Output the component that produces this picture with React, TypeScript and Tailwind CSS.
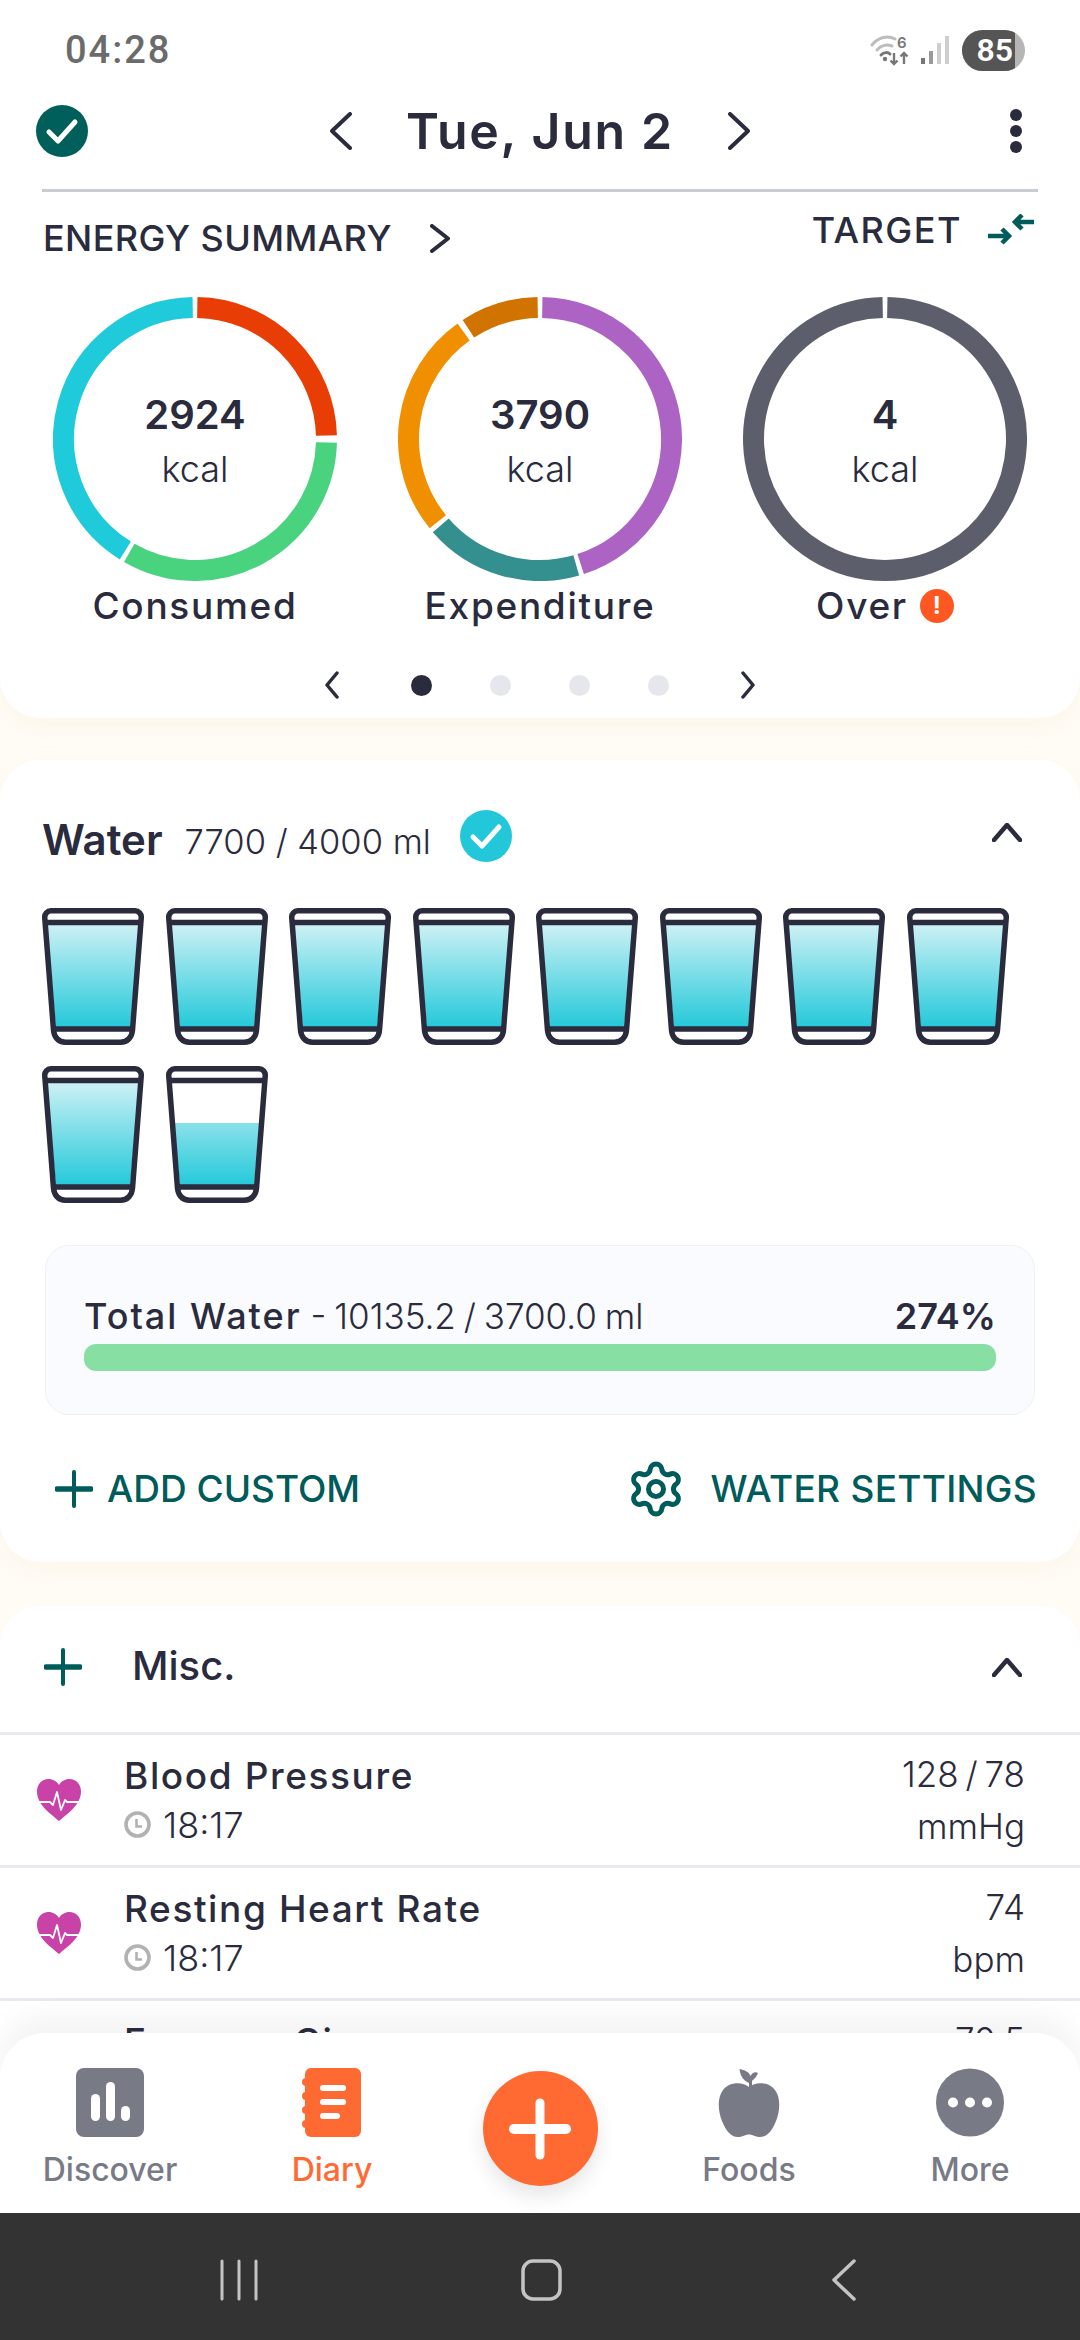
import { Settings } from "lucide-react";

const INK = "#2a2b3d";

function arc(r: number, a0: number, a1: number) {
  const p = (a: number) => {
    const t = ((a - 90) * Math.PI) / 180;
    return `${(142 + r * Math.cos(t)).toFixed(2)} ${(142 + r * Math.sin(t)).toFixed(2)}`;
  };
  return `M${p(a0)} A${r} ${r} 0 ${a1 - a0 > 180 ? 1 : 0} 1 ${p(a1)}`;
}

type Seg = [number, number, string];

function Ring({ segs, value }: { segs: Seg[]; value: string }) {
  return (
    <div className="relative w-[284px] h-[284px]">
      <svg width="284" height="284" viewBox="0 0 284 284">
        {segs.map(([a, b, c], i) => (
          <path key={i} d={arc(131.5, a, b)} fill="none" stroke={c} strokeWidth="21" />
        ))}
      </svg>
      <div className="absolute inset-0 flex flex-col items-center pt-[94px]">
        <div className="text-[40px] leading-[48px] font-semibold text-[#2a2b3d]">{value}</div>
        <div className="text-[36px] leading-[44px] mt-[8px] font-light text-[#2a2b3d]">kcal</div>
      </div>
    </div>
  );
}

function Chevron({ dir, w, h, sw = 4, color = INK }: { dir: "l" | "r" | "u"; w: number; h: number; sw?: number; color?: string }) {
  const d =
    dir === "l"
      ? `M${w - 2} 2 L2 ${h / 2} L${w - 2} ${h - 2}`
      : dir === "r"
        ? `M2 2 L${w - 2} ${h / 2} L2 ${h - 2}`
        : `M2 ${h - 2} L${w / 2} 2 L${w - 2} ${h - 2}`;
  return (
    <svg width={w} height={h} viewBox={`0 0 ${w} ${h}`} className="shrink-0">
      <path d={d} fill="none" stroke={color} strokeWidth={sw} strokeLinecap="round" strokeLinejoin="round" />
    </svg>
  );
}

function Check({ fill, size = 52 }: { fill: string; size?: number }) {
  return (
    <svg width={size} height={size} viewBox="0 0 52 52" className="shrink-0">
      <circle cx="26" cy="26" r="26" fill={fill} />
      <path d="M13 27 L22 36 L39 17" fill="none" stroke="#fff" strokeWidth="5" strokeLinecap="round" strokeLinejoin="round" />
    </svg>
  );
}

function Plus() {
  return (
    <svg width="38" height="38" viewBox="0 0 38 38" className="shrink-0">
      <path d="M2 19 H36" stroke="#005b5b" strokeWidth="5.5" strokeLinecap="round" />
      <path d="M19 2 V36" stroke="#005b5b" strokeWidth="4" strokeLinecap="round" />
    </svg>
  );
}

function Cup({ id, level = 16 }: { id: string; level?: number }) {
  return (
    <svg width="102" height="137" viewBox="0 0 102 137">
      <defs>
        <linearGradient id={id} gradientUnits="userSpaceOnUse" x1="0" y1="16" x2="0" y2="119">
          <stop offset="0" stopColor="#cdf1f5" />
          <stop offset="1" stopColor="#25c9da" />
        </linearGradient>
      </defs>
      <path
        d={`M${5 + ((level - 14) / 107) * 9} ${level} H${97 - ((level - 14) / 107) * 9} L88 121 H14 Z`}
        fill={`url(#${id})`}
      />
      <path
        d="M9 2.75H93a6.5 6.5 0 0 1 6.25 7L90.5 122c-.5 7-5 12.25-12 12.25H23.5c-7 0-11.5-5.25-12-12.25L2.75 9.75a6.5 6.5 0 0 1 6.25-7Z"
        fill="none"
        stroke={INK}
        strokeWidth="5.5"
      />
      <path d="M3 14.5H99M11 121H91" stroke={INK} strokeWidth="5.5" />
    </svg>
  );
}

function Heart() {
  return (
    <svg width="44" height="42" viewBox="0 0 44 42" className="shrink-0">
      <path
        d="M22 42 C14 35 0 26 0 12.5 C0 5 5 0 11.5 0 C16 0 20 2.5 22 6 C24 2.5 28 0 32.5 0 C39 0 44 5 44 12.5 C44 26 30 35 22 42Z"
        fill="#c942a8"
      />
      <path d="M2 23 H13 L16 26 L20 13 L24 31 L28 21 L30 23 H42" fill="none" stroke="#fff" strokeWidth="1.8" strokeLinejoin="round" />
    </svg>
  );
}

function Clock() {
  return (
    <svg width="27" height="27" viewBox="0 0 27 27" className="shrink-0">
      <circle cx="13.5" cy="13.5" r="11.5" fill="none" stroke="#b2b2b2" strokeWidth="3.6" />
      <path d="M12.5 8 V15.5 H18" fill="none" stroke="#b2b2b2" strokeWidth="2.6" />
    </svg>
  );
}

function Row({ name, value, unit, time = "18:17" }: { name: string; value: string; unit: string; time?: string }) {
  return (
    <div className="flex items-center h-[130px] pl-[37px] pr-[55px] text-[#2a2b3d]">
      <Heart />
      <div className="ml-[43px] flex-1">
        <div className="text-[37px] leading-[44px] font-medium tracking-[1.6px]">{name}</div>
        <div className="flex items-center mt-[5px] text-[36px] leading-[44px] font-light">
          <Clock />
          <span className="ml-[12px]">{time}</span>
        </div>
      </div>
      <div className="text-right text-[35px] leading-[44px] font-light [word-spacing:-3px]">
        <div>{value}</div>
        <div className="mt-[8px]">{unit}</div>
      </div>
    </div>
  );
}

function NavItem({ w, label, color, children }: { w: string; label: string; color: string; children: React.ReactNode }) {
  return (
    <div className={`${w} flex flex-col items-center pt-[35px]`}>
      <div className="h-[69px] flex items-center">{children}</div>
      <div className={`mt-[13px] text-[32px] leading-[40px] font-medium ${color}`}>{label}</div>
    </div>
  );
}

const RINGS: { segs: Seg[]; value: string }[] = [
  {
    value: "2924",
    segs: [
      [1, 88.5, "#e83e05"],
      [91.5, 210, "#49d37f"],
      [212, 359, "#1fcadb"],
    ],
  },
  {
    value: "3790",
    segs: [
      [1, 162, "#ac63c3"],
      [164, 229, "#34908f"],
      [231, 324.5, "#f09000"],
      [327, 359, "#d17300"],
    ],
  },
  { value: "4", segs: [[1, 359, "#5c5f6b"]] },
];

export default function App() {
  return (
    <div className="relative w-[1080px] h-[2340px] flex flex-col overflow-hidden bg-[#fffcf6] font-[Inter,sans-serif] text-[#2a2b3d]">
      <div className="relative flex-1 overflow-hidden">
        {/* Energy card */}
        <div className="bg-white rounded-b-[40px] shadow-[0_8px_24px_rgba(240,200,140,0.10)] pb-[18px]">
          <div className="h-[100px] flex items-center justify-between pl-[65px] pr-[55px]">
            <div className="font-[Roboto,sans-serif] font-medium text-[38px] text-[#6b6b6b] tracking-[2px]">04:28</div>
            <div className="flex items-center">
              <svg width="42" height="32" viewBox="0 0 42 32" className="shrink-0">
                <g fill="none" stroke="#bdbdbd" strokeWidth="3" strokeLinecap="round">
                  <path d="M2 11 C8 3 18 1 25 5" />
                  <path d="M7 16 C11 11 17 10 22 12" />
                </g>
                <path d="M11 21 C14 18 18 18 20 20" fill="none" stroke="#777" strokeWidth="3" strokeLinecap="round" />
                <circle cx="15" cy="25" r="2.2" fill="#777" />
                <path d="M24 19 V30 M20.5 26.5 L24 30 L27.5 26.5 M34 30 V19 M30.5 22.5 L34 19 L37.5 22.5" fill="none" stroke="#777" strokeWidth="2.4" />
                <text x="27" y="14" fontSize="15" fontWeight="600" fill="#777">6</text>
              </svg>
              <svg width="30" height="30" viewBox="0 0 30 30" className="ml-[8px] shrink-0">
                <rect x="1" y="23" width="4" height="6" fill="#777" />
                <rect x="9" y="16" width="4" height="13" fill="#9a9a9a" />
                <rect x="17" y="8" width="4" height="21" fill="#cfcfcf" />
                <rect x="25" y="1" width="4" height="28" fill="#cfcfcf" />
              </svg>
              <div className="ml-[12px] w-[63px] h-[41px] rounded-full overflow-hidden bg-[#b6b6b6] flex">
                <div className="w-[53px] h-full bg-[#555555] flex items-center justify-end">
                  <span className="text-white text-[32px] leading-none font-semibold font-[Roboto,sans-serif] mr-[2px]">85</span>
                </div>
              </div>
            </div>
          </div>
          <div className="h-[62px] flex items-center pl-[36px] pr-[58px]">
            <Check fill="#005f5b" />
            <div className="flex-1 flex items-center justify-center pr-[18px]">
              <Chevron dir="l" w={22} h={38} />
              <div className="w-[376px] text-center text-[50px] leading-[56px] font-semibold tracking-[1.7px]">Tue, Jun 2</div>
              <Chevron dir="r" w={22} h={38} />
            </div>
            <div className="w-[12px] flex flex-col gap-[4px]">
              <div className="w-[12px] h-[12px] rounded-full bg-[#2a2b3d]" />
              <div className="w-[12px] h-[12px] rounded-full bg-[#2a2b3d]" />
              <div className="w-[12px] h-[12px] rounded-full bg-[#2a2b3d]" />
            </div>
          </div>
          <div className="mt-[27px] mx-[42px] h-[3px] bg-[#c9ccd3]" />
          <div className="h-[105px] pt-[16px] pl-[43px] pr-[46px] flex justify-between items-start">
            <div className="mt-[8px] flex items-center">
              <div className="text-[36px] leading-[44px] font-medium tracking-[0.4px]">ENERGY SUMMARY</div>
              <div className="ml-[38px]">
                <Chevron dir="r" w={20} h={29} sw={4} />
              </div>
            </div>
            <div className="flex items-center">
              <div className="text-[36px] leading-[44px] font-medium tracking-[1.5px]">TARGET</div>
              <svg width="46" height="32" viewBox="0 0 46 32" className="ml-[26px] shrink-0">
                <path d="M46 8 H28 M34 1 L27 8 L34 15" fill="none" stroke="#005b5b" strokeWidth="4.5" />
                <path d="M0 22 H18 M14 15 L21 22 L14 29" fill="none" stroke="#005b5b" strokeWidth="4.5" />
              </svg>
            </div>
          </div>
          <div className="flex justify-center">
            {RINGS.map((r, i) => (
              <div key={i} className="w-[345px] flex flex-col items-center">
                <Ring segs={r.segs} value={r.value} />
              </div>
            ))}
          </div>
          <div className="flex justify-center mt-[3px] text-[37px] leading-[44px] font-medium tracking-[1.7px]">
            <div className="w-[345px] text-center">Consumed</div>
            <div className="w-[345px] text-center">Expenditure</div>
            <div className="w-[345px] flex justify-center items-center gap-[12px]">
              <span>Over</span>
              <span className="w-[34px] h-[34px] rounded-full bg-[#ff5722] text-white flex items-center justify-center text-[24px] leading-none font-bold tracking-normal">!</span>
            </div>
          </div>
          <div className="mt-[42px] h-[30px] flex items-center justify-center">
            <Chevron dir="l" w={14} h={28} sw={3.5} />
            <div className="mx-[72px] flex items-center gap-[57.7px]">
              <div className="w-[21px] h-[21px] rounded-full bg-[#2a2b3d]" />
              <div className="w-[21px] h-[21px] rounded-full bg-[#e5e7ed]" />
              <div className="w-[21px] h-[21px] rounded-full bg-[#e5e7ed]" />
              <div className="w-[21px] h-[21px] rounded-full bg-[#e5e7ed]" />
            </div>
            <Chevron dir="r" w={14} h={28} sw={3.5} />
          </div>
        </div>

        {/* Water card */}
        <div className="mt-[42px] bg-white rounded-[40px] shadow-[0_8px_24px_rgba(240,200,140,0.10)] pt-[56px] pb-[49px]">
          <div className="h-[48px] pl-[42px] pr-[58px] flex items-center">
            <div className="text-[42px] leading-[48px] font-semibold">Water</div>
            <div className="ml-[22px] text-[34.5px] leading-[48px] font-light mt-[4px]">7700 / 4000 ml</div>
            <div className="ml-[29px] -mt-[8px]">
              <Check fill="#22c8da" />
            </div>
            <div className="ml-auto -mt-[16px]">
              <Chevron dir="u" w={30} h={19} sw={4.5} />
            </div>
          </div>
          <div className="mt-[44px] ml-[42px] w-[988px] flex flex-wrap gap-x-[21.5px] gap-y-[21px]">
            {Array.from({ length: 9 }).map((_, i) => (
              <Cup key={i} id={`g${i}`} />
            ))}
            <Cup id="g9" level={57} />
          </div>
          <div className="mt-[42px] mx-[45px] h-[170px] rounded-[24px] bg-[#fafbfe] border border-[#f0f1f5] px-[38px] pt-[48px]">
            <div className="flex justify-between text-[36px] leading-[44px]">
              <div>
                <span className="font-medium tracking-[2px]">Total Water</span>
                <span className="ml-[9px] font-light text-[35px] [word-spacing:-2px]">- 10135.2 / 3700.0 ml</span>
              </div>
              <div className="font-semibold">274%</div>
            </div>
            <div className="mt-[6px] h-[27px] rounded-[12px] bg-[#87dfa3]" />
          </div>
          <div className="mt-[50px] h-[48px] pl-[55px] pr-[43px] flex items-center text-[#005b5b] text-[37px] leading-[48px] font-medium">
            <Plus />
            <div className="ml-[14px]">ADD CUSTOM</div>
            <div className="ml-auto">
              <Settings size={60} strokeWidth={2} color="#005b5b" />
            </div>
            <div className="ml-[24px] tracking-[0.3px]">WATER SETTINGS</div>
          </div>
        </div>

        {/* Misc card */}
        <div className="mt-[44px] bg-white rounded-t-[40px] h-[600px]">
          <div className="h-[126px] pl-[44px] pr-[58px] pt-[36px] flex items-start">
            <div className="mt-[6px]">
              <Plus />
            </div>
            <div className="ml-[50px] text-[40px] leading-[48px] font-medium">Misc.</div>
            <div className="ml-auto mt-[16px]">
              <Chevron dir="u" w={30} h={19} sw={4.5} />
            </div>
          </div>
          <div className="h-[3px] bg-[#e9eaef]" />
          <Row name="Blood Pressure" value="128 / 78" unit="mmHg" />
          <div className="h-[3px] bg-[#e9eaef]" />
          <Row name="Resting Heart Rate" value="74" unit="bpm" />
          <div className="h-[3px] bg-[#e9eaef]" />
          <Row name="Forearm Circ" value="70.5" unit="cm" />
        </div>

        {/* Bottom navigation sheet */}
        <div className="absolute left-0 right-0 bottom-0 h-[180px] rounded-t-[45px] bg-white shadow-[0_-16px_30px_rgba(0,0,0,0.05)] flex">
          <NavItem w="w-[220px]" label="Discover" color="text-[#787a86]">
            <svg width="68" height="69" viewBox="0 0 68 69">
              <rect width="68" height="69" rx="8" fill="#787a86" />
              <rect x="15" y="26" width="9" height="27" rx="4.5" fill="#fff" />
              <rect x="30" y="14" width="9" height="39" rx="4.5" fill="#fff" />
              <rect x="45" y="38" width="9" height="15" rx="4.5" fill="#fff" />
            </svg>
          </NavItem>
          <NavItem w="w-[224px]" label="Diary" color="text-[#ff6a33]">
            <svg width="60" height="69" viewBox="0 0 60 69">
              <rect x="3" y="0" width="56" height="69" rx="6" fill="#ff6a33" />
              <circle cx="4" cy="14" r="4" fill="#ff6a33" />
              <circle cx="4" cy="28" r="4" fill="#ff6a33" />
              <circle cx="4" cy="42" r="4" fill="#ff6a33" />
              <circle cx="4" cy="56" r="4" fill="#ff6a33" />
              <rect x="18" y="17" width="26" height="6" rx="3" fill="#fff" />
              <rect x="18" y="31" width="26" height="6" rx="3" fill="#fff" />
              <rect x="18" y="45" width="20" height="6" rx="3" fill="#fff" />
            </svg>
          </NavItem>
          <div className="w-[192px] flex justify-center pt-[38px]">
            <div className="w-[115px] h-[115px] rounded-full bg-[#ff6a33] shadow-[0_10px_20px_rgba(0,0,0,0.10)] flex items-center justify-center">
              <svg width="62" height="62" viewBox="0 0 62 62">
                <path d="M5 31 H57" stroke="#fff" strokeWidth="10" strokeLinecap="round" />
                <path d="M31 5 V57" stroke="#fff" strokeWidth="9" strokeLinecap="round" />
              </svg>
            </div>
          </div>
          <NavItem w="w-[226px]" label="Foods" color="text-[#787a86]">
            <svg width="62" height="69" viewBox="0 0 62 69">
              <path
                d="M31 19 C25 14 12 13 5 22 C-1 30 0 43 4 53 C8 63 13 69 20 69 C25 69 27 66.5 31 66.5 C35 66.5 37 69 42 69 C49 69 54 63 58 53 C62 43 63 30 57 22 C50 13 37 14 31 19Z"
                fill="#787a86"
              />
              <path d="M21.5 1 C27 2 31 4 32.5 8 C34 5 37 3 40 5 C38 10 35 12 34 13 L34 21 L31 21 L31 15 C26 13 22 8 21.5 1Z" fill="#787a86" />
            </svg>
          </NavItem>
          <NavItem w="w-[216px]" label="More" color="text-[#787a86]">
            <svg width="68" height="69" viewBox="0 0 68 69">
              <circle cx="34" cy="34.5" r="34" fill="#787a86" />
              <circle cx="17" cy="34.5" r="5" fill="#fff" />
              <circle cx="34" cy="34.5" r="5" fill="#fff" />
              <circle cx="51" cy="34.5" r="5" fill="#fff" />
            </svg>
          </NavItem>
        </div>
      </div>

      {/* Android navigation bar */}
      <div className="h-[127px] shrink-0 bg-[#333333] flex items-center pt-[6px]">
        <div className="ml-[220px]">
          <svg width="38" height="42" viewBox="0 0 38 42">
            <path d="M2 2 V40 M19 2 V40 M36 2 V40" stroke="#c4c4c4" strokeWidth="3" strokeLinecap="round" />
          </svg>
        </div>
        <div className="ml-[263px]">
          <svg width="41" height="42" viewBox="0 0 41 42">
            <rect x="2" y="2" width="37" height="38" rx="10" fill="none" stroke="#c4c4c4" strokeWidth="3.5" />
          </svg>
        </div>
        <div className="ml-[270px]">
          <svg width="24" height="42" viewBox="0 0 24 42">
            <path d="M22 2 L2 21 L22 40" fill="none" stroke="#c4c4c4" strokeWidth="3.5" strokeLinecap="round" strokeLinejoin="round" />
          </svg>
        </div>
      </div>
    </div>
  );
}
